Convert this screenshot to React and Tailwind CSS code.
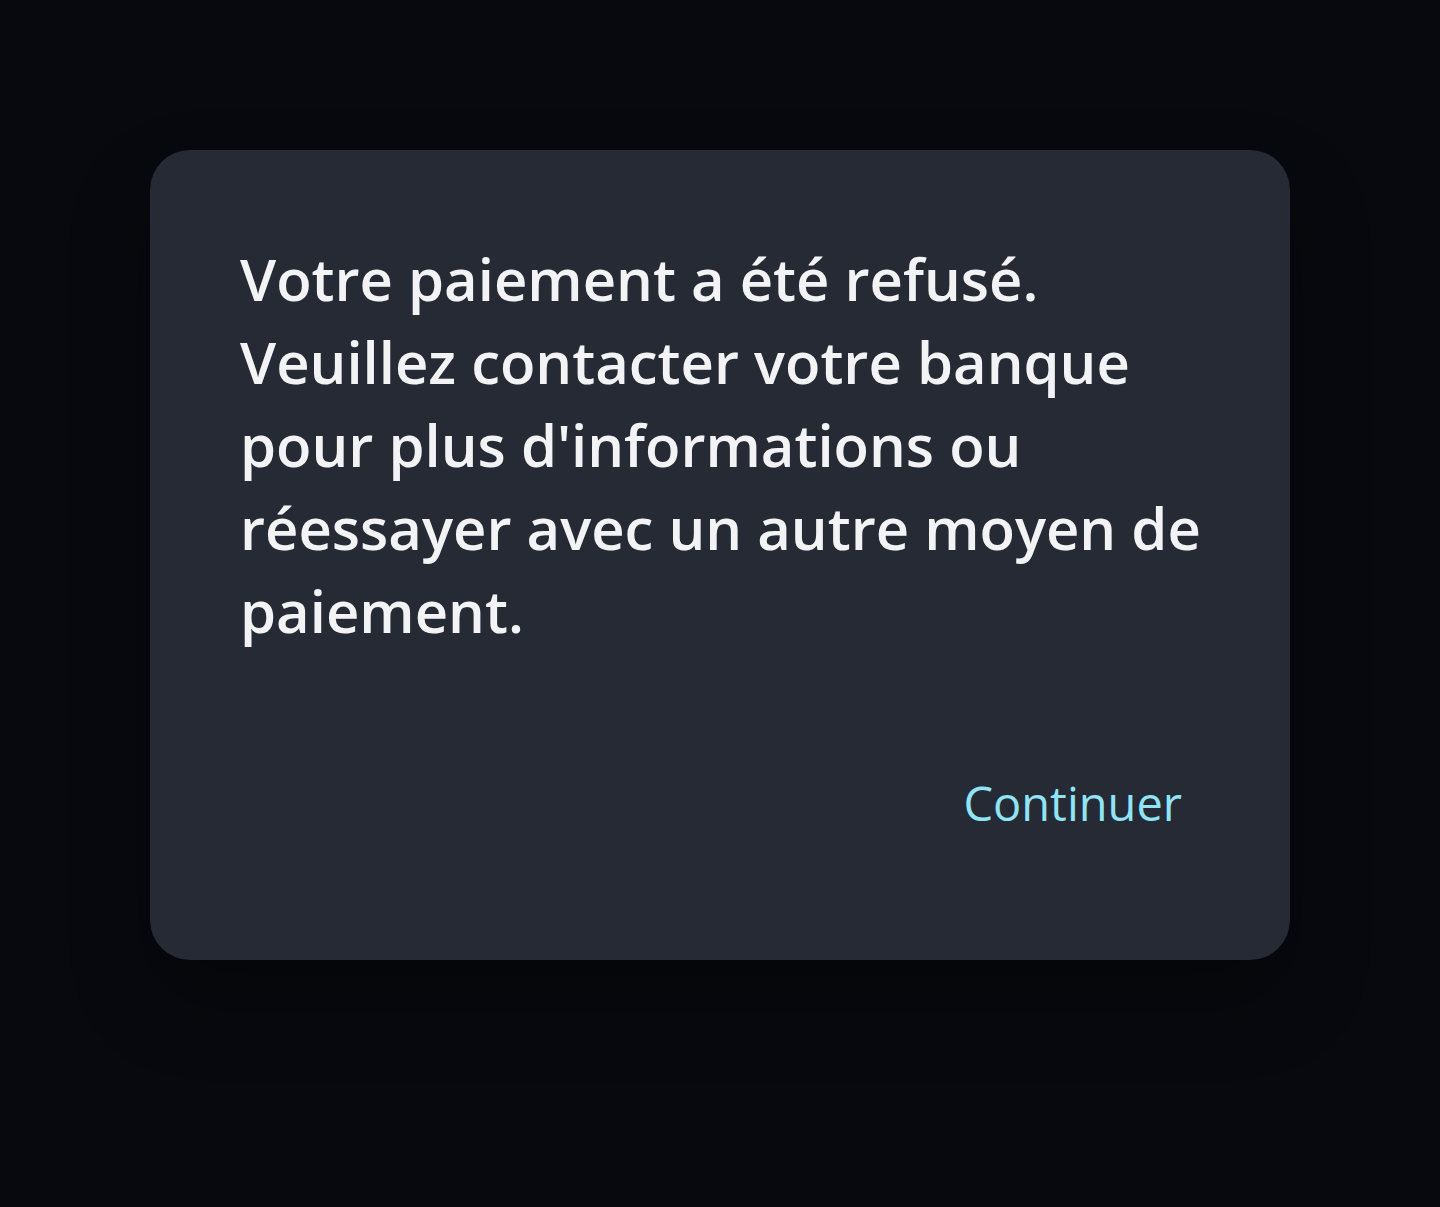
const lines = [
  'Votre paiement a été refusé.',
  'Veuillez contacter votre banque',
  "pour plus d'informations ou",
  'réessayer avec un autre moyen de',
  'paiement.',
];

export default function App() {
  return (
    <div className="min-h-[1207px] w-full bg-[#07090e] px-[150px] pt-[150px]" style={{ fontFamily: '"Open Sans", Lato, sans-serif' }}>
      <div className="flex h-[810px] flex-col rounded-[40px] bg-[#252a34] pl-[90px] pr-[80px] pt-[87px] shadow-[0_40px_80px_rgba(0,0,0,0.3)]">
        <p className="text-[58px] font-semibold leading-[83px] text-[#f3f3f5] whitespace-nowrap">
          {lines.map((l) => (
            <span key={l} className="block">{l}</span>
          ))}
        </p>
        <div className="mt-[121px] flex justify-end pr-[28px]">
          <button className="text-[47px] leading-[60px] text-[#90e4f6]">Continuer</button>
        </div>
      </div>
    </div>
  );
}
